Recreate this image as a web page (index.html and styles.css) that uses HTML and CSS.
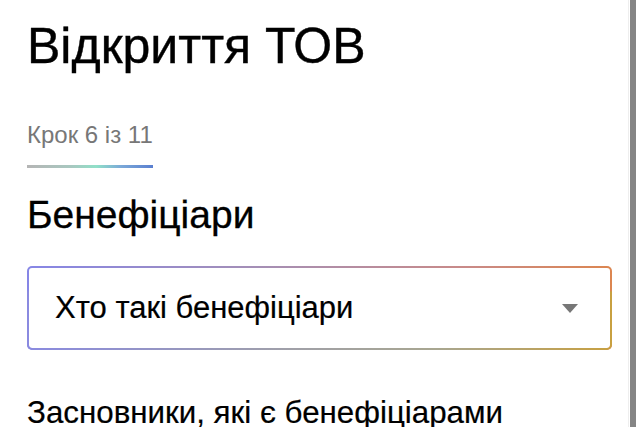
FILE: index.html
```html
<!DOCTYPE html>
<html lang="uk">
<head>
<meta charset="utf-8">
<link rel="stylesheet" href="styles.css">
</head>
<body>
<div class="page">
  <main class="content">
    <h1 class="title">Відкриття ТОВ</h1>
    <div class="step">Крок 6 із 11</div>
    <div class="progress"></div>
    <h2 class="section">Бенефіціари</h2>
    <div class="select">
      <span class="select-label">Хто такі бенефіціари</span>
      <span class="caret"></span>
    </div>
    <h3 class="sub">Засновники, які є бенефіціарами</h3>
  </main>
  <div class="scrollbar"><div class="thumb"></div></div>
</div>
</body>
</html>
```
FILE: styles.css
```css
html, body {
  margin: 0;
  padding: 0;
  background: #fff;
  height: 100%;
  overflow: hidden;
}
.page {
  display: flex;
  height: 427px;
  font-family: "Liberation Sans", Arial, sans-serif;
  color: #000;
}
.content {
  flex: 1;
  padding: 18px 0 0 27px;
  min-width: 0;
}
.title {
  margin: 0;
  font-size: 50px;
  font-weight: 400;
  line-height: 56px;
  -webkit-text-stroke: 0.4px #000;
}
.step {
  margin-top: 47px;
  font-size: 24px;
  line-height: 28px;
  color: #777;
}
.progress {
  margin-top: 16px;
  width: 126px;
  height: 3px;
  background: linear-gradient(90deg, #b5b5b5 0%, #a8c8c0 35%, #90e0c8 55%, #7aa8d8 75%, #5a7fd0 100%);
}
.section {
  margin: 25px 0 0;
  font-size: 39px;
  font-weight: 400;
  line-height: 44px;
  -webkit-text-stroke: 0.3px #000;
}
.select {
  margin-top: 29px;
  width: 585px;
  height: 84px;
  box-sizing: border-box;
  border: 2px solid transparent;
  border-radius: 5px;
  background:
    linear-gradient(#fff, #fff) padding-box,
    linear-gradient(90deg, #8686e6 0%, #a58fb5 40%, #c98a88 75%, #dc8650 100%) border-box;
  position: relative;
  display: flex;
  align-items: center;
  padding: 0 26px;
}
.select::before {
  content: "";
  position: absolute;
  inset: -2px;
  border-radius: 5px;
  padding: 2px;
  background: linear-gradient(90deg, #8a8ae0 0%, #a0a0a8 45%, #a8a690 70%, #c8a040 100%);
  -webkit-mask: linear-gradient(#000 0 0) content-box, linear-gradient(#000 0 0);
  -webkit-mask-composite: xor;
  mask-composite: exclude;
  clip-path: inset(30% 0 0 0);
}
.select-label {
  flex: 1;
  font-size: 31px;
  line-height: 36px;
  -webkit-text-stroke: 0.2px #000;
}
.caret {
  width: 0;
  height: 0;
  border-left: 8px solid transparent;
  border-right: 8px solid transparent;
  border-top: 9px solid #777;
  margin-right: 6px;
}
.sub {
  margin: 45px 0 0;
  font-size: 31.3px;
  font-weight: 400;
  line-height: 36px;
  white-space: nowrap;
  -webkit-text-stroke: 0.2px #000;
}
.scrollbar {
  width: 12px;
  flex: none;
  display: flex;
  border-left: 1px solid #eee;
  padding-left: 1px;
  box-sizing: border-box;
}
.thumb {
  width: 6px;
  height: 100%;
  background: #858585;
}
```
